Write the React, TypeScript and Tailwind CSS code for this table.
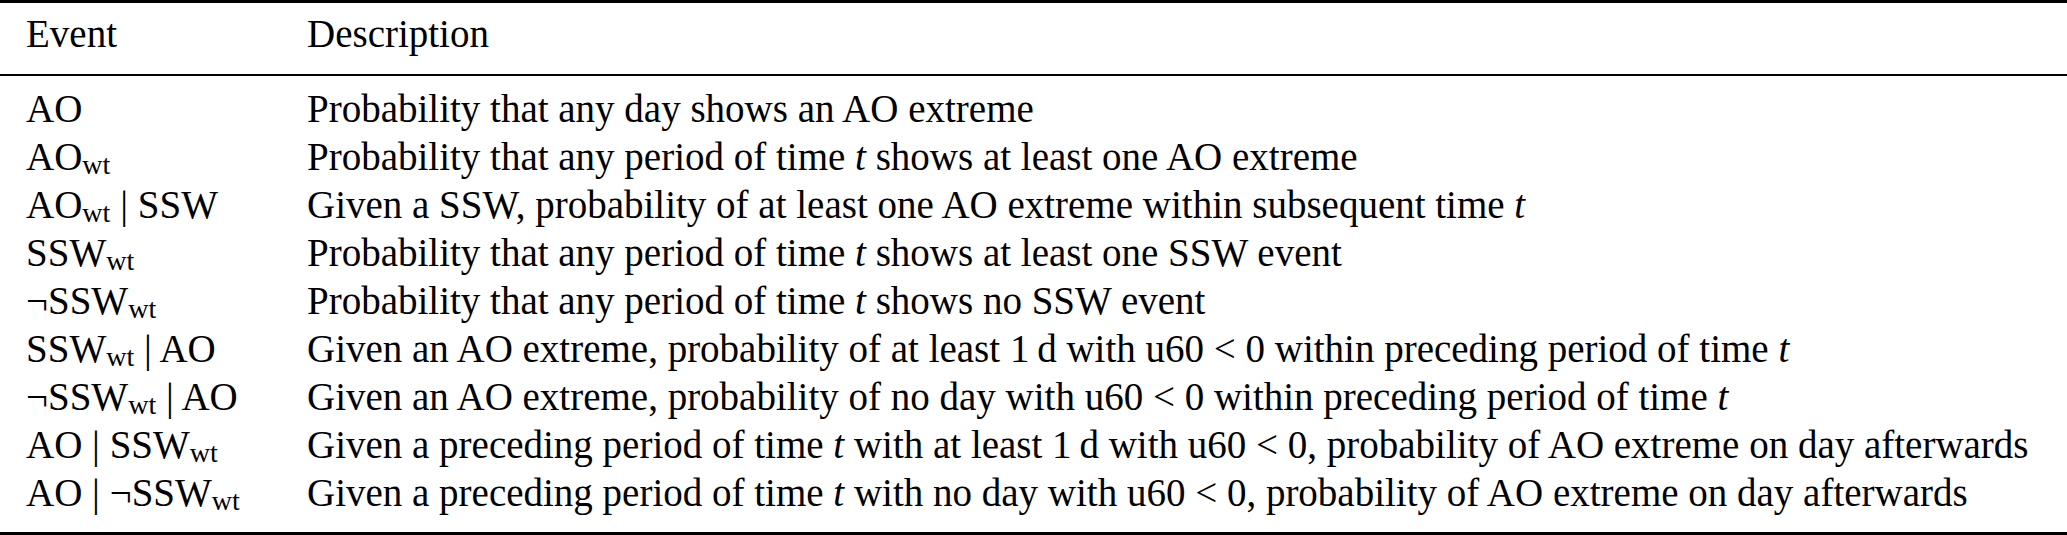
import React from "react";

function Wt() {
  return <sub className="text-[0.72em] relative top-[0.16em] align-baseline">wt</sub>;
}

function T() {
  return <i>t</i>;
}

const rows: { ev: React.ReactNode; desc: React.ReactNode }[] = [
  { ev: <>AO</>, desc: <>Probability that any day shows an AO extreme</> },
  { ev: <>AO<Wt /></>, desc: <>Probability that any period of time <T /> shows at least one AO extreme</> },
  { ev: <>AO<Wt /> | SSW</>, desc: <>Given a SSW, probability of at least one AO extreme within subsequent time <T /></> },
  { ev: <>SSW<Wt /></>, desc: <>Probability that any period of time <T /> shows at least one SSW event</> },
  { ev: <>¬SSW<Wt /></>, desc: <>Probability that any period of time <T /> shows no SSW event</> },
  { ev: <>SSW<Wt /> | AO</>, desc: <>Given an AO extreme, probability of at least 1{"\u2009"}d with u60 &lt; 0 within preceding period of time <T /></> },
  { ev: <>¬SSW<Wt /> | AO</>, desc: <>Given an AO extreme, probability of no day with u60 &lt; 0 within preceding period of time <T /></> },
  { ev: <>AO | SSW<Wt /></>, desc: <>Given a preceding period of time <T /> with at least 1{"\u2009"}d with u60 &lt; 0, probability of AO extreme on day afterwards</> },
  { ev: <>AO | ¬SSW<Wt /></>, desc: <>Given a preceding period of time <T /> with no day with u60 &lt; 0, probability of AO extreme on day afterwards</> },
];

export default function App() {
  return (
    <div className="w-[2067px] h-[535px] bg-white text-black font-['Liberation_Serif',serif] text-[39px] leading-[48px]">
      <div className="h-[3px] bg-black" />
      <div className="flex pt-[7px] pb-[16px]">
        <div className="w-[307px] pl-[26px]">Event</div>
        <div>Description</div>
      </div>
      <div className="h-[2px] bg-black" />
      <div className="pt-[9px] pb-[15px]">
        {rows.map((r, i) => (
          <div key={i} className="flex h-[48px] whitespace-nowrap">
            <div className="w-[307px] pl-[26px]">{r.ev}</div>
            <div>{r.desc}</div>
          </div>
        ))}
      </div>
      <div className="h-[3px] bg-black" />
    </div>
  );
}
